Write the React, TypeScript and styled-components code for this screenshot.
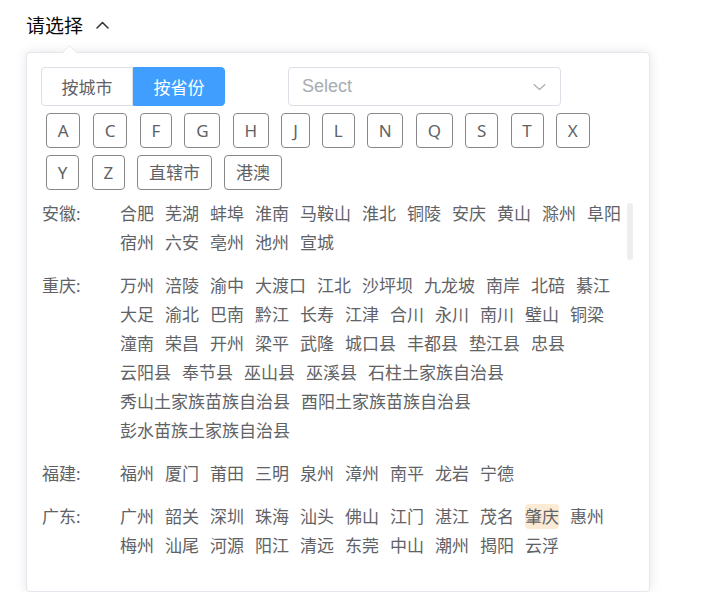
import React from "react";
import styled, { createGlobalStyle } from "styled-components";

const GlobalStyle = createGlobalStyle`
  html, body { margin: 0; padding: 0; background: #ffffff; }
  body { font-family: "Noto Sans", "Noto Sans CJK SC", sans-serif; }
  * { box-sizing: border-box; }
`;

const Page = styled.div`
  padding: 12px 0 0 26px;
`;

const Trigger = styled.div`
  display: flex;
  align-items: center;
  height: 26px;
  font-size: 19px;
  color: #0a0a0a;
  gap: 13px;
  cursor: pointer;
`;

const Popover = styled.div`
  position: relative;
  margin-top: 14px;
  width: 624px;
  height: 540px;
  padding: 14px;
  background: #ffffff;
  border: 1px solid #e4e7ed;
  border-radius: 4px;
  box-shadow: 0 0 12px rgba(0, 0, 0, 0.1);
  display: flex;
  flex-direction: column;

  &::before {
    content: "";
    position: absolute;
    top: -6px;
    left: 37px;
    width: 10px;
    height: 10px;
    background: #ffffff;
    border-top: 1px solid #e4e7ed;
    border-left: 1px solid #e4e7ed;
    border-top-left-radius: 2px;
    transform: rotate(45deg);
  }
`;

const TopRow = styled.div`
  display: flex;
  align-items: center;
  height: 39px;
`;

const Segmented = styled.div`
  display: flex;
  height: 39px;
`;

const SegButton = styled.button<{ $active?: boolean; $pos: "first" | "last" }>`
  font-family: inherit;
  font-size: 17px;
  height: 39px;
  width: 92px;
  padding: 0;
  margin: 0;
  border: 1px solid ${(p) => (p.$active ? "#409eff" : "#dcdfe6")};
  background: ${(p) => (p.$active ? "#409eff" : "#ffffff")};
  color: ${(p) => (p.$active ? "#ffffff" : "#606266")};
  border-radius: ${(p) => (p.$pos === "first" ? "4px 0 0 4px" : "0 4px 4px 0")};
  cursor: pointer;
`;

const SelectBox = styled.div`
  margin-left: 63px;
  width: 273px;
  height: 39px;
  border: 1px solid #dcdfe6;
  border-radius: 4px;
  display: flex;
  align-items: center;
  justify-content: space-between;
  padding: 0 14px 0 13px;
`;

const Placeholder = styled.span`
  font-family: "Liberation Sans", "Noto Sans", sans-serif;
  font-size: 18px;
  color: #a8abb2;
`;

const Letters = styled.div`
  display: flex;
  flex-wrap: wrap;
  gap: 7px 12.5px;
  margin-top: 7px;
  padding: 0 20px 0 5px;
`;

const LetterButton = styled.button`
  font-family: inherit;
  font-size: 17px;
  height: 35px;
  padding: 0 10.75px;
  margin: 0;
  border: 1px solid #888888;
  border-radius: 4px;
  background: #ffffff;
  color: #606266;
  line-height: 33px;
  cursor: pointer;
`;

const ScrollArea = styled.div`
  position: relative;
  margin-top: 11px;
  height: 376px;
  overflow: hidden;
  padding-right: 14px;
  padding-left: 1px;
`;

const Thumb = styled.div`
  position: absolute;
  top: 2px;
  right: 2px;
  width: 6px;
  height: 57px;
  border-radius: 4px;
  background: rgba(144, 147, 153, 0.16);
`;

const Groups = styled.div`
  display: flex;
  flex-direction: column;
  gap: 18px;
`;

const Group = styled.div`
  display: flex;
  align-items: flex-start;
`;

const GroupLabel = styled.div`
  flex: 0 0 78px;
  font-size: 17px;
  line-height: 25px;
  color: #606266;
`;

const Cities = styled.div`
  flex: 0 0 504px;
  display: flex;
  flex-wrap: wrap;
  gap: 4px 11px;
`;

const City = styled.span<{ $active?: boolean }>`
  font-size: 17px;
  line-height: 25px;
  height: 25px;
  color: #606266;
  border-radius: 4px;
  background: ${(p) => (p.$active ? "#fbebd5" : "transparent")};
  cursor: pointer;
  white-space: nowrap;
`;

const letters = ["A", "C", "F", "G", "H", "J", "L", "N", "Q", "S", "T", "X", "Y", "Z", "直辖市", "港澳"];

const groups: { name: string; cities: string[] }[] = [
  {
    name: "安徽",
    cities: ["合肥", "芜湖", "蚌埠", "淮南", "马鞍山", "淮北", "铜陵", "安庆", "黄山", "滁州", "阜阳", "宿州", "六安", "亳州", "池州", "宣城"],
  },
  {
    name: "重庆",
    cities: [
      "万州", "涪陵", "渝中", "大渡口", "江北", "沙坪坝", "九龙坡", "南岸", "北碚", "綦江",
      "大足", "渝北", "巴南", "黔江", "长寿", "江津", "合川", "永川", "南川", "璧山", "铜梁",
      "潼南", "荣昌", "开州", "梁平", "武隆", "城口县", "丰都县", "垫江县", "忠县",
      "云阳县", "奉节县", "巫山县", "巫溪县", "石柱土家族自治县",
      "秀山土家族苗族自治县", "酉阳土家族苗族自治县", "彭水苗族土家族自治县",
    ],
  },
  {
    name: "福建",
    cities: ["福州", "厦门", "莆田", "三明", "泉州", "漳州", "南平", "龙岩", "宁德"],
  },
  {
    name: "广东",
    cities: [
      "广州", "韶关", "深圳", "珠海", "汕头", "佛山", "江门", "湛江", "茂名", "肇庆", "惠州",
      "梅州", "汕尾", "河源", "阳江", "清远", "东莞", "中山", "潮州", "揭阳", "云浮",
    ],
  },
];

const ChevronUp = () => (
  <svg width="13" height="8" viewBox="0 0 13 8" fill="none">
    <path d="M1 7L6.5 1.5L12 7" stroke="#303133" strokeWidth="1.5" strokeLinecap="round" strokeLinejoin="round" />
  </svg>
);

const ChevronDown = () => (
  <svg width="13" height="8" viewBox="0 0 13 8" fill="none">
    <path d="M1 1.5L6.5 6.5L12 1.5" stroke="#a8abb2" strokeWidth="1.1" strokeLinecap="round" strokeLinejoin="round" />
  </svg>
);

export default function App() {
  return (
    <Page>
      <GlobalStyle />
      <Trigger>
        <span>请选择</span>
        <ChevronUp />
      </Trigger>
      <Popover>
        <TopRow>
          <Segmented>
            <SegButton $pos="first">按城市</SegButton>
            <SegButton $pos="last" $active>
              按省份
            </SegButton>
          </Segmented>
          <SelectBox>
            <Placeholder>Select</Placeholder>
            <ChevronDown />
          </SelectBox>
        </TopRow>
        <Letters>
          {letters.map((l) => (
            <LetterButton key={l}>{l}</LetterButton>
          ))}
        </Letters>
        <ScrollArea>
          <Groups>
            {groups.map((g) => (
              <Group key={g.name}>
                <GroupLabel>{g.name}:</GroupLabel>
                <Cities>
                  {g.cities.map((c) => (
                    <City key={c} $active={c === "肇庆"}>
                      {c}
                    </City>
                  ))}
                </Cities>
              </Group>
            ))}
          </Groups>
          <Thumb />
        </ScrollArea>
      </Popover>
    </Page>
  );
}
